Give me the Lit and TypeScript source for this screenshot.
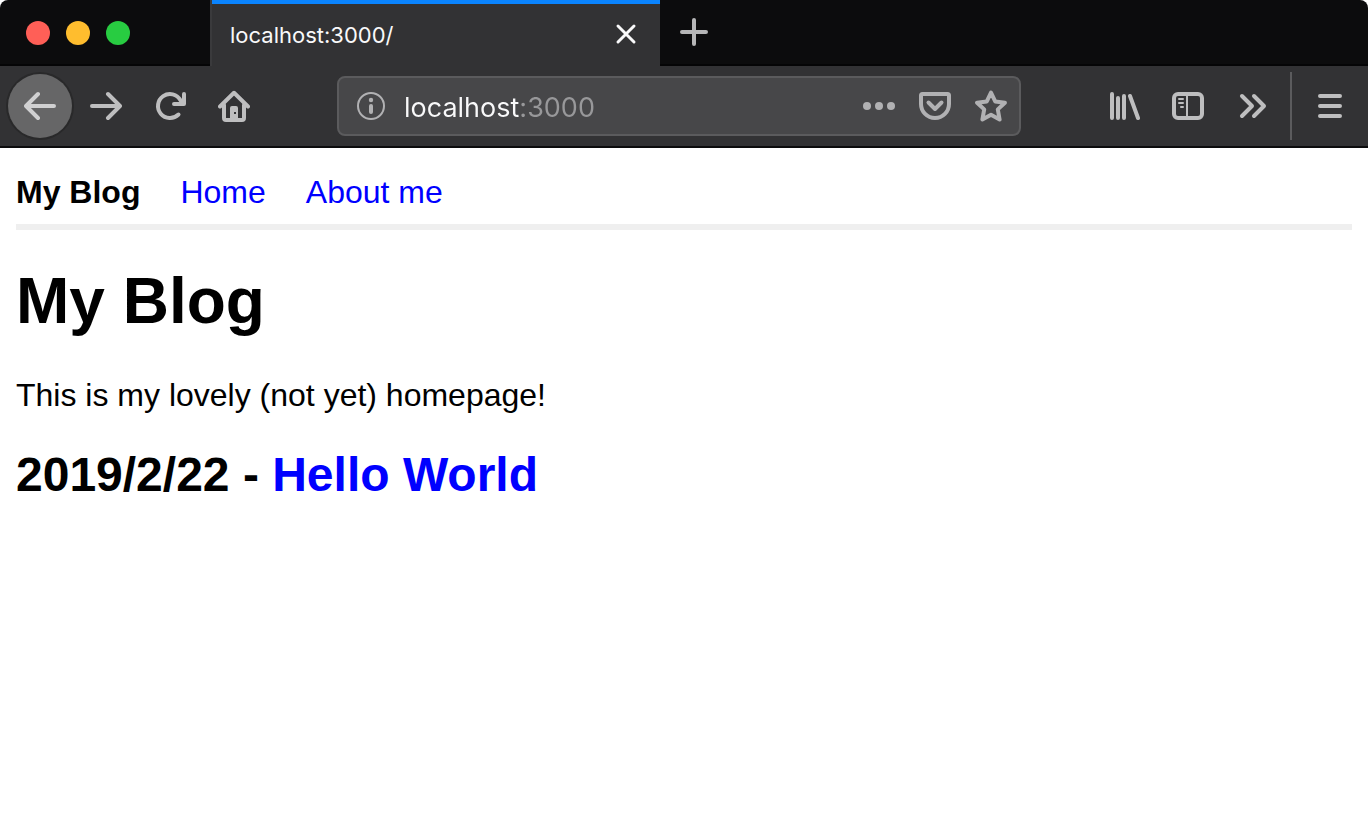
import { LitElement, html, css, svg, type TemplateResult } from "lit";
import { customElement, property } from "lit/decorators.js";

const icons: Record<string, TemplateResult> = {
  back: svg`<path d="M30 16H2.5M14 4 2 16l12 12"/>`,
  forward: svg`<path d="M2 16h27.5M18 4l12 12-12 12"/>`,
  reload: svg`<path d="M24.5 24.5A12 12 0 1 1 26.5 10.2"/><path d="M30 4v10H20"/><path class="solid" d="M24 13l5-5v5z"/>`,
  home: svg`<path d="M2 16.500 16 2.800l14 13.700"/><path d="M6 15v13a2 2 0 0 0 2 2h16a2 2 0 0 0 2-2V15"/><path class="solid" fill-rule="evenodd" d="M12 18a2 2 0 0 1 2-2h4a2 2 0 0 1 2 2v12h-8zM16 22v2h2v-2z"/>`,
  info: svg`<circle class="thin" cx="16" cy="16" r="13"/><circle class="solid" cx="16" cy="10" r="2.200"/><path d="M16 16v6"/>`,
  dots: svg`<circle class="solid" cx="4" cy="16" r="4"/><circle class="solid" cx="16" cy="16" r="4"/><circle class="solid" cx="28" cy="16" r="4"/>`,
  pocket: svg`<path d="M3.500 4h25A1.500 1.500 0 0 1 30 5.500V14a14 14 0 0 1-28 0V5.500A1.500 1.500 0 0 1 3.500 4z"/><path d="M9.500 12.500 16 19l6.500-6.500"/>`,
  star: svg`<path d="M16 2.600l4.200 8.800 9.700 1.300-7.100 6.700 1.800 10.100L16 24.800 7.400 29.500l1.800-10.100-7.100-6.700 9.700-1.300z"/>`,
  library: svg`<path d="M4 4v24M10 8v20M16 6v22M22 6l8 22"/>`,
  sidebar: svg`<rect x="2" y="4" width="28" height="24" rx="4"/><path class="thin" d="M15 5v22M7 9h4M7 13h4M9 17h2"/>`,
  more: svg`<path d="M6 6l10 10L6 26M18 6l10 10-10 10"/>`,
  menu: svg`<path d="M6 6h20M6 16h20M6 26h20"/>`,
  close: svg`<path class="cross" d="M8 8l16 16M24 8 8 24"/>`,
  plus: svg`<path d="M16 4v24M4 16h24"/>`,
};

const icon = (name: string) =>
  html`<svg class="icon" viewBox="0 0 32 32" aria-hidden="true">${icons[name]}</svg>`;

const iconStyles = css`
  .icon {
    display: block;
    flex: none;
    width: 32px;
    height: 32px;
    fill: none;
    stroke: currentColor;
    stroke-width: 4;
    stroke-linecap: round;
    stroke-linejoin: round;
  }
  .solid { fill: currentColor; stroke: none; }
  .thin { stroke-width: 2; }
  .cross { stroke-width: 3; }
  button {
    display: flex;
    flex: none;
    align-items: center;
    justify-content: center;
    margin: 0;
    padding: 0;
    border: 0;
    background: none;
    color: inherit;
  }
`;

@customElement("tab-strip")
class TabStrip extends LitElement {
  @property() label = "";

  static styles = [
    iconStyles,
    css`
      :host {
        display: flex;
        height: 66px;
        background: #0c0c0d;
        color: #b6b6b7;
        font-family: Inter, "Noto Sans", sans-serif;
      }
      .lights {
        display: flex;
        align-items: center;
        gap: 16px;
        box-sizing: border-box;
        width: 210px;
        padding: 2px 0 0 26px;
        border-bottom: 2px solid #050506;
      }
      .light { width: 24px; height: 24px; border-radius: 50%; }
      .red { background: #ff5f57; }
      .yellow { background: #ffbd2e; }
      .green { background: #28cc41; }
      .tab {
        display: flex;
        align-items: center;
        justify-content: space-between;
        box-sizing: border-box;
        width: 450px;
        padding: 2px 18px 0;
        border-left: 2px solid #3a3a3c;
        background: linear-gradient(#0a84ff 4px, #323234 4px);
        color: #f9f9fa;
      }
      .title { padding-top: 2px; font-size: 22px; line-height: 28px; }
      .rest {
        display: flex;
        flex: 1;
        align-items: center;
        padding-left: 18px;
        border-bottom: 2px solid #050506;
      }
    `,
  ];

  render() {
    return html`
      <div class="lights">
        <button class="light red" aria-label="Close window"></button>
        <button class="light yellow" aria-label="Minimize window"></button>
        <button class="light green" aria-label="Zoom window"></button>
      </div>
      <div class="tab">
        <span class="title">${this.label}</span>
        <button aria-label="Close tab">${icon("close")}</button>
      </div>
      <div class="rest">
        <button aria-label="New tab">${icon("plus")}</button>
      </div>
    `;
  }
}

@customElement("nav-toolbar")
class NavToolbar extends LitElement {
  @property() address = "";

  static styles = [
    iconStyles,
    css`
      :host {
        display: flex;
        align-items: center;
        height: 80px;
        padding: 0 6px 0 8px;
        border-bottom: 2px solid #0c0c0d;
        background: #323234;
        color: #bebebf;
      }
      .tool { width: 64px; height: 64px; }
      .back {
        margin-right: 2px;
        border-radius: 50%;
        background: #666667;
        box-shadow: 0 0 0 2px #29292a;
        color: #d0d0d1;
      }
      .field {
        display: flex;
        flex: 1;
        align-items: center;
        box-sizing: border-box;
        min-width: 0;
        height: 60px;
        margin: 0 71px;
        padding: 0 0 0 16px;
        border: 2px solid #5b5b5d;
        border-radius: 8px;
        background: #474749;
        color: #b1b1b3;
      }
      .address {
        flex: 1;
        min-width: 0;
        height: 40px;
        margin: 0 0 0 17px;
        padding: 2px 0 0;
        border: 0;
        outline: 0;
        background: linear-gradient(to right, #f9f9fa 115px, #98989a 115px);
        background-clip: text;
        -webkit-background-clip: text;
        color: transparent;
        font: 27px/38px Inter, "Noto Sans", sans-serif;
      }
      .action { width: 56px; height: 56px; }
      .separator {
        width: 2px;
        height: 68px;
        margin: 0 6px;
        background: #5b5b5d;
      }
    `,
  ];

  render() {
    return html`
      <button class="tool back" aria-label="Back">${icon("back")}</button>
      <button class="tool" aria-label="Forward">${icon("forward")}</button>
      <button class="tool" aria-label="Reload">${icon("reload")}</button>
      <button class="tool" aria-label="Home">${icon("home")}</button>
      <div class="field">
        <button aria-label="Site information">${icon("info")}</button>
        <input class="address" type="text" aria-label="Address" .value=${this.address} />
        <button class="action" aria-label="Page actions">${icon("dots")}</button>
        <button class="action" aria-label="Save to Pocket">${icon("pocket")}</button>
        <button class="action" aria-label="Bookmark">${icon("star")}</button>
      </div>
      <button class="tool" aria-label="Library">${icon("library")}</button>
      <button class="tool" aria-label="Sidebars">${icon("sidebar")}</button>
      <button class="tool" aria-label="More tools">${icon("more")}</button>
      <div class="separator"></div>
      <button class="tool" aria-label="Menu">${icon("menu")}</button>
    `;
  }
}

@customElement("blog-page")
class BlogPage extends LitElement {
  static styles = css`
    :host {
      display: block;
      padding: 26px 16px;
      color: #000;
      font: 32px/36px "Liberation Sans", Arial, sans-serif;
    }
    a { color: #00f; text-decoration: none; }
    nav {
      display: flex;
      gap: 40px;
      padding-bottom: 14px;
      border-bottom: 6px solid #efefef;
    }
    h1 { margin: 35px 0 40px; font-size: 64px; line-height: 72px; }
    p { margin: 0; }
    h2 { margin: 35px 0 0; font-size: 48px; line-height: 54px; }
  `;

  render() {
    return html`
      <nav>
        <strong>My Blog</strong>
        <a href="#home">Home</a>
        <a href="#about">About me</a>
      </nav>
      <main>
        <h1>My Blog</h1>
        <p>This is my lovely (not yet) homepage!</p>
        <h2>2019/2/22 - <a href="#hello-world">Hello World</a></h2>
      </main>
    `;
  }
}

@customElement("app-root")
class AppRoot extends LitElement {
  static styles = css`
    :host { display: block; min-height: 100vh; background: #fff; }
    .chrome { overflow: hidden; border-radius: 8px 8px 0 0; }
  `;

  render() {
    return html`
      <header class="chrome">
        <tab-strip label="localhost:3000/"></tab-strip>
        <nav-toolbar address="localhost:3000"></nav-toolbar>
      </header>
      <blog-page></blog-page>
    `;
  }
}
